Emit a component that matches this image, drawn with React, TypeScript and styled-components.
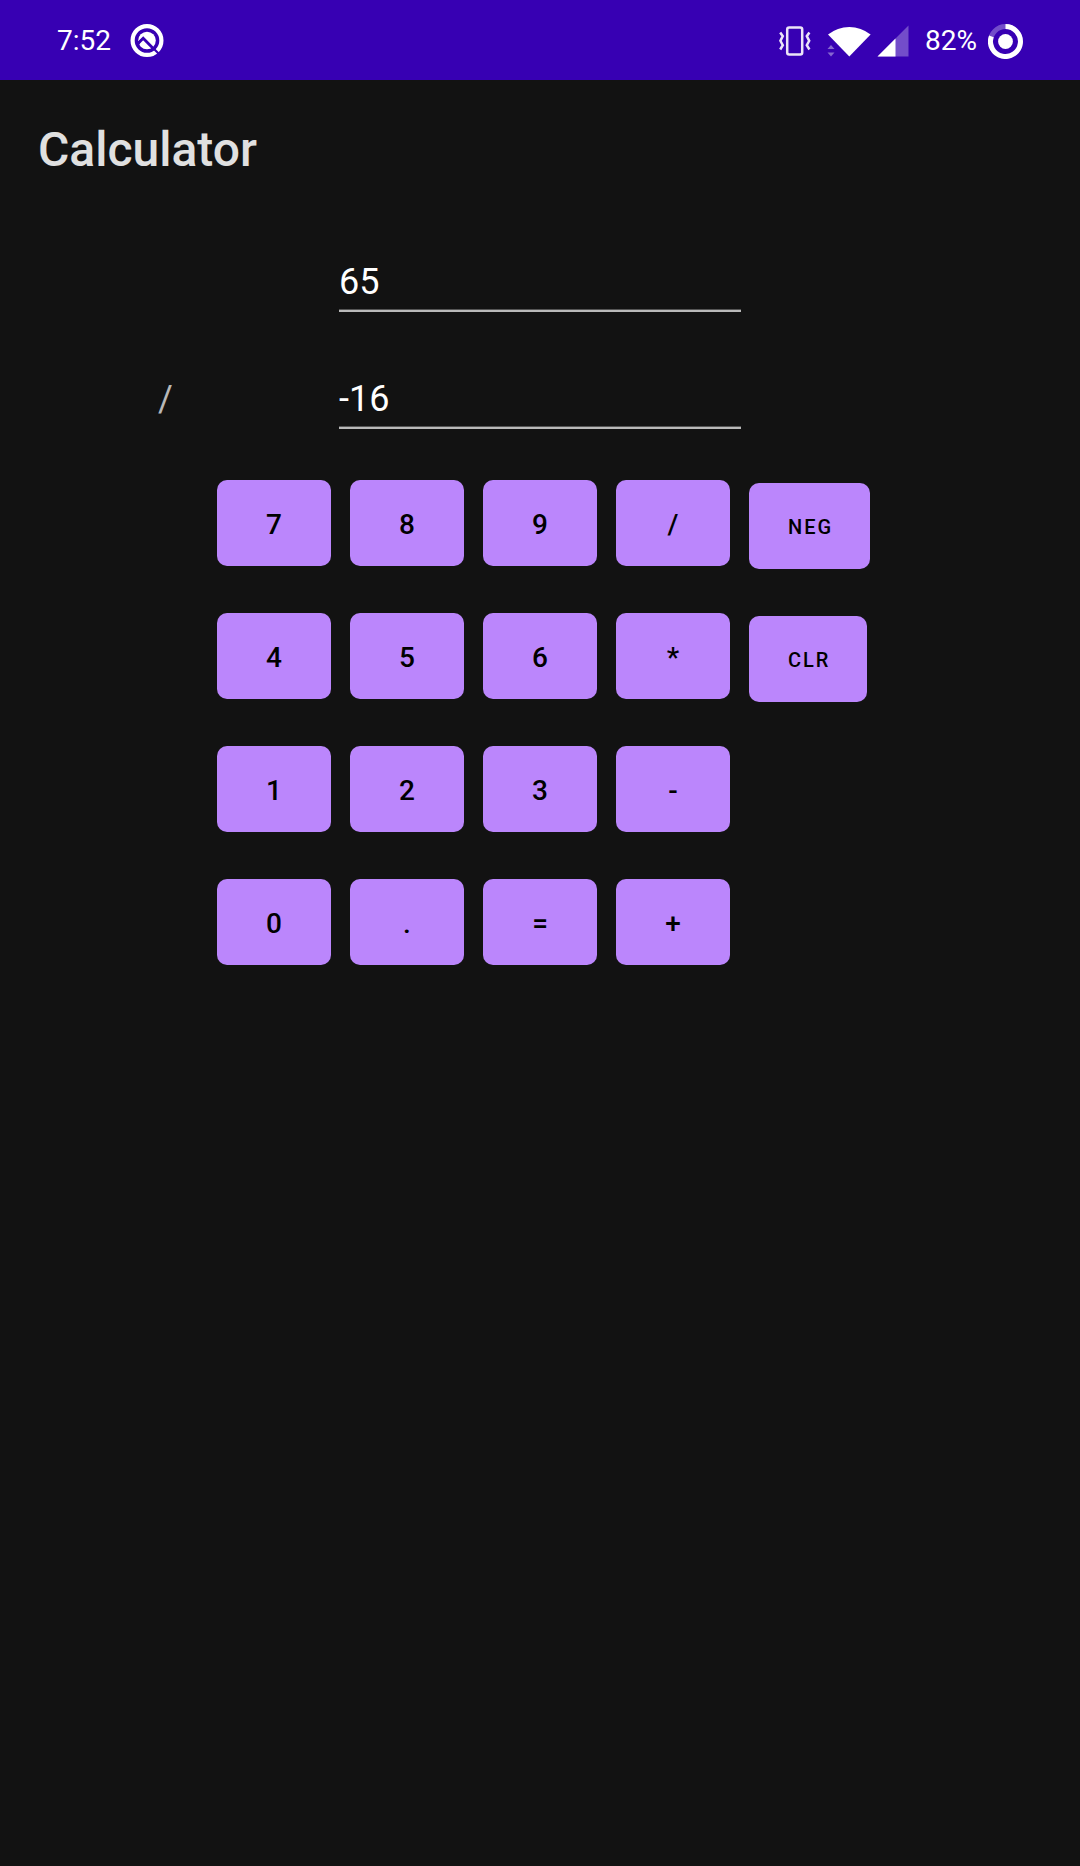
import React, { useState } from "react";
import styled, { createGlobalStyle } from "styled-components";

const GlobalStyle = createGlobalStyle`
  *, *::before, *::after { box-sizing: border-box; }
  body {
    margin: 0;
    background: #121212;
    color: #ffffff;
    font-family: Roboto, "Noto Sans", sans-serif;
  }
`;

const Screen = styled.div`
  min-height: 100vh;
  background: #121212;
`;

const StatusBar = styled.div`
  display: flex;
  align-items: center;
  justify-content: space-between;
  height: 80px;
  padding: 2px 57px 0;
  background: #3700b3;
  font-size: 28px;
  line-height: 34px;
`;

const StatusGroup = styled.div<{ $gap: number }>`
  display: flex;
  align-items: center;
  gap: ${({ $gap }) => $gap}px;
`;

const Glyph = styled.svg`
  display: block;
  flex: none;
`;

const AppBar = styled.header`
  padding: 42px 38px 38px;
`;

const Title = styled.h1`
  margin: 0;
  color: #e0e0e0;
  font-size: 48px;
  font-weight: 500;
  line-height: 56px;
`;

const Main = styled.main`
  display: flex;
  flex-direction: column;
  gap: 51px;
  padding-top: 38px;
`;

const Operands = styled.div`
  display: grid;
  grid-template-columns: 1fr 402px 1fr;
  row-gap: 59px;
`;

const Operator = styled.output`
  grid-column: 1;
  padding: 7px 8px 7px 0;
  color: #b8b8b8;
  font-size: 36px;
  line-height: 42px;
  text-align: center;
`;

const OperandInput = styled.input`
  grid-column: 2;
  width: 100%;
  height: 58px;
  padding: 7px 0;
  border: 0;
  border-bottom: 2px solid #b9b9b9;
  border-radius: 0;
  outline: 0;
  background: transparent;
  box-shadow: inset 0 -1px 0 #555555;
  color: #ffffff;
  font-family: inherit;
  font-size: 36px;
  line-height: 42px;
`;

const Keypad = styled.div`
  display: flex;
  justify-content: center;
  gap: 19px;
`;

const KeyGrid = styled.div`
  display: grid;
  grid-template-columns: repeat(4, 114px);
  gap: 47px 19px;
`;

const ActionColumn = styled.div`
  display: flex;
  flex-direction: column;
  align-items: flex-start;
  gap: 47px;
  width: 114px;
  padding-top: 3px;
`;

const Key = styled.button`
  height: 86px;
  padding: 2px 0 0;
  border: 0;
  border-radius: 10px;
  background: #bb86fc;
  color: #000000;
  font-family: inherit;
  font-size: 28px;
  font-weight: 500;
  cursor: pointer;
`;

const ActionKey = styled(Key)`
  padding: 2px 37px 0 39px;
  font-size: 20px;
  letter-spacing: 2px;
`;

const KEYS = ["7", "8", "9", "/", "4", "5", "6", "*", "1", "2", "3", "-", "0", ".", "=", "+"];

function compute(a: number, op: string, b: number) {
  if (op === "/") return a / b;
  if (op === "*") return a * b;
  if (op === "-") return a - b;
  return a + b;
}

function AppGlyph() {
  return (
    <Glyph width="34" height="34" viewBox="0 0 34 34" fill="none" aria-hidden="true">
      <circle cx="17" cy="16.5" r="14.4" stroke="#fff" strokeWidth="4.2" />
      <circle cx="17" cy="16.5" r="8.8" fill="#fff" />
      <path d="M6.5 21L13.2 14.2L23 24.2" stroke="#3700b3" strokeWidth="2.8" />
      <path d="M7.5 18L12 14L8.5 22.5Z" fill="#3700b3" />
      <path d="M23.6 24.6L29.5 30.6" stroke="#3700b3" strokeWidth="2.2" />
    </Glyph>
  );
}

function VibrateGlyph() {
  return (
    <Glyph width="32" height="30" viewBox="0 0 32 30" fill="none" stroke="#ece4f8" strokeWidth="2.5" aria-hidden="true">
      <rect x="8.2" y="1.5" width="15" height="27" rx="2" />
      <path d="M1.2 6.5L3.8 10.2L1.4 14.8L3.8 19.2L1.2 23.5" />
      <path d="M30.4 6.5L27.8 10.2L30.2 14.8L27.8 19.2L30.4 23.5" />
    </Glyph>
  );
}

function WifiGlyph() {
  return (
    <Glyph width="44" height="32" viewBox="0 0 44 32" aria-hidden="true">
      <path d="M0.5 24L4 20L7.5 24ZM0.5 27.5H7.5L4 31.5Z" fill="#8767d0" />
      <path d="M1 9.5A34 34 0 0 1 43.6 9.5L22.3 31.5Z" fill="#fff" />
    </Glyph>
  );
}

function SignalGlyph() {
  return (
    <Glyph width="32" height="32" viewBox="0 0 32 32" aria-hidden="true">
      <path d="M31.5 0.5V31.5H0.5Z" fill="#734dca" />
      <path d="M18.5 13.5V31.5H0.5Z" fill="#fff" />
    </Glyph>
  );
}

function BatteryGlyph() {
  return (
    <Glyph width="35" height="35" viewBox="0 0 35 35" fill="none" aria-hidden="true">
      <circle cx="17.5" cy="17.5" r="15" stroke="#734dca" strokeWidth="5" />
      <path d="M17.5 2.5A15 15 0 1 1 3.4 12.3" stroke="#fff" strokeWidth="5" />
      <circle cx="17.5" cy="17.5" r="7.4" fill="#fff" />
    </Glyph>
  );
}

export default function App() {
  const [first, setFirst] = useState("65");
  const [second, setSecond] = useState("-16");
  const [operator, setOperator] = useState("/");

  const press = (key: string) => {
    if (key === "=") {
      setFirst(String(compute(Number(first), operator, Number(second))));
      setSecond("");
    } else if ("/*-+".includes(key)) {
      setOperator(key);
    } else {
      setSecond(second + key);
    }
  };

  const negate = () => setSecond(second.startsWith("-") ? second.slice(1) : "-" + second);

  const clear = () => {
    setFirst("");
    setSecond("");
  };

  return (
    <Screen>
      <GlobalStyle />
      <StatusBar>
        <StatusGroup $gap={19}>
          <span>7:52</span>
          <AppGlyph />
        </StatusGroup>
        <StatusGroup $gap={11}>
          <StatusGroup $gap={16}>
            <VibrateGlyph />
            <StatusGroup $gap={6}>
              <WifiGlyph />
              <SignalGlyph />
            </StatusGroup>
            <span>82%</span>
          </StatusGroup>
          <BatteryGlyph />
        </StatusGroup>
      </StatusBar>
      <AppBar>
        <Title>Calculator</Title>
      </AppBar>
      <Main>
        <Operands>
          <OperandInput
            aria-label="First number"
            inputMode="decimal"
            value={first}
            onChange={(e) => setFirst(e.target.value)}
          />
          <Operator aria-label="Operator">{operator}</Operator>
          <OperandInput
            aria-label="Second number"
            inputMode="decimal"
            value={second}
            onChange={(e) => setSecond(e.target.value)}
          />
        </Operands>
        <Keypad>
          <KeyGrid>
            {KEYS.map((key) => (
              <Key key={key} type="button" onClick={() => press(key)}>
                {key}
              </Key>
            ))}
          </KeyGrid>
          <ActionColumn>
            <ActionKey type="button" onClick={negate}>NEG</ActionKey>
            <ActionKey type="button" onClick={clear}>CLR</ActionKey>
          </ActionColumn>
        </Keypad>
      </Main>
    </Screen>
  );
}
